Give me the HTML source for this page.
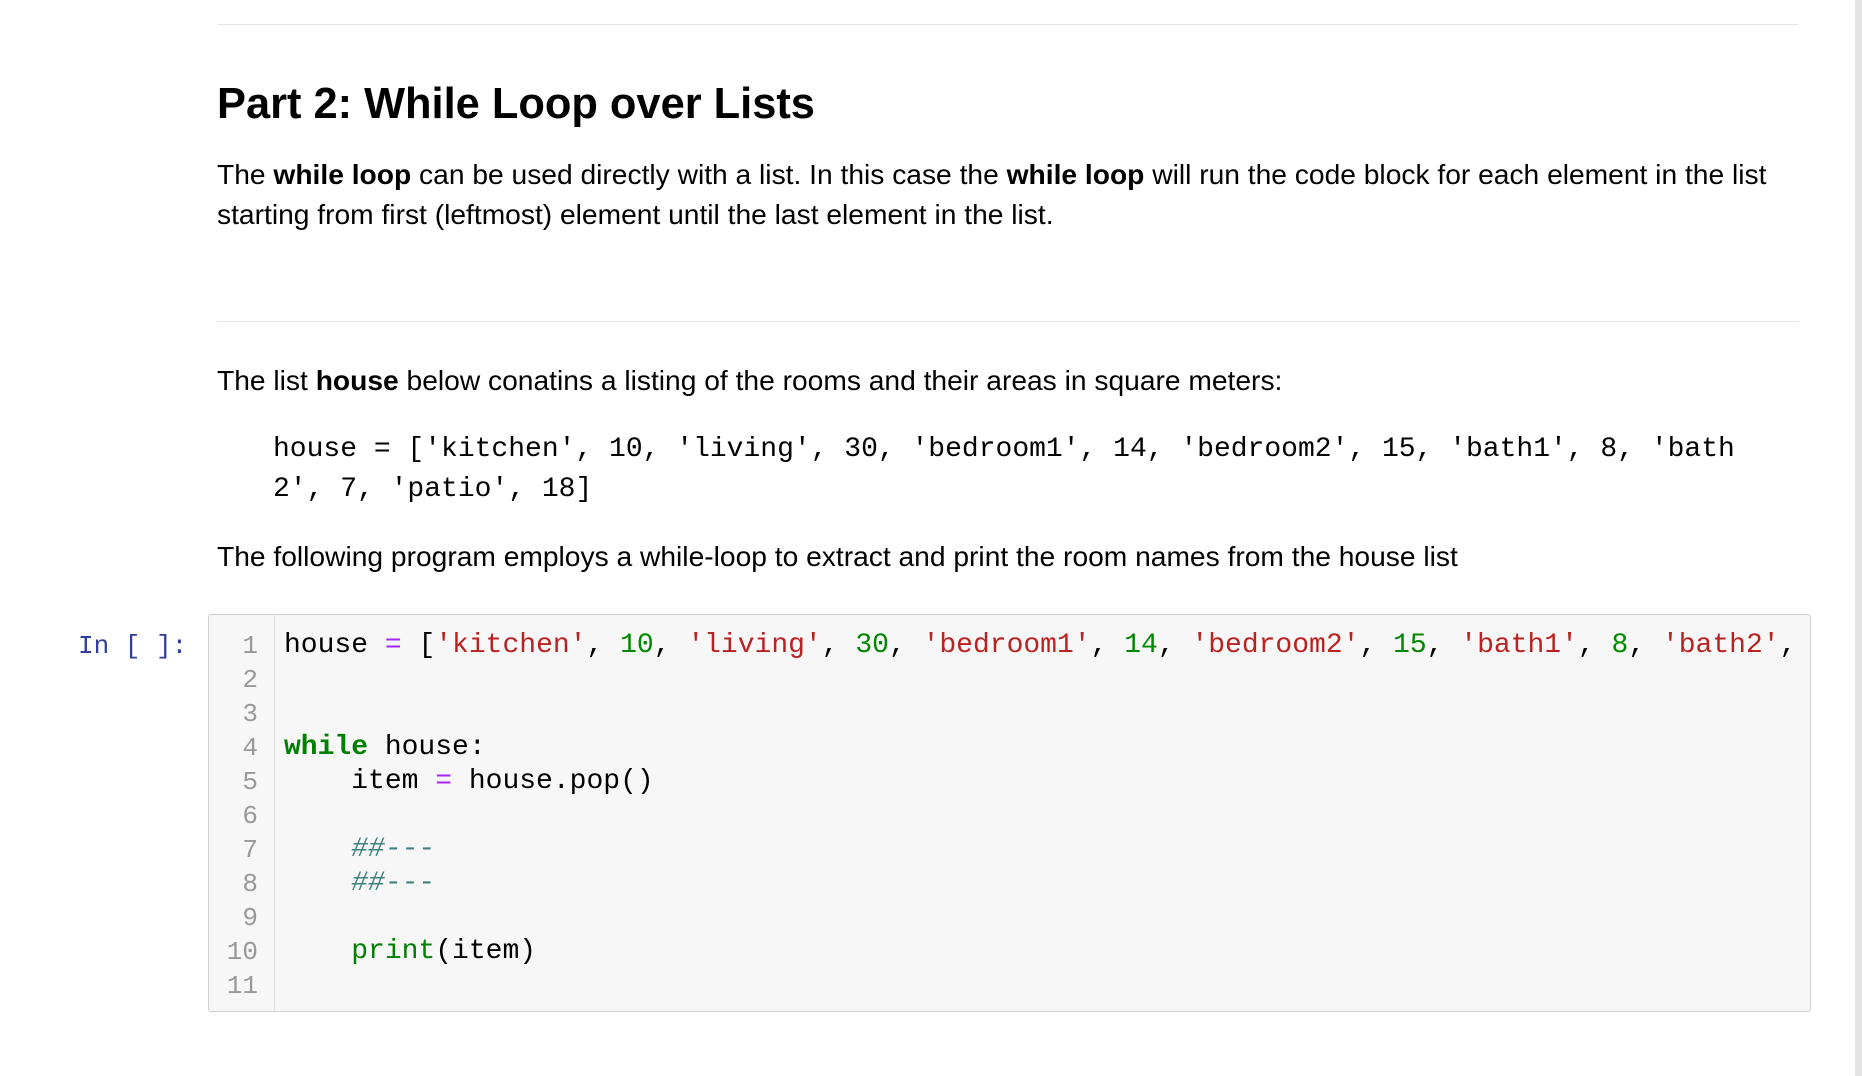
<!DOCTYPE html>
<html><head><meta charset="utf-8"><style>
html,body{margin:0;padding:0;background:#fff;width:1862px;height:1076px;overflow:hidden;position:relative}
.a{position:absolute;white-space:nowrap}
.hr{position:absolute;left:217px;width:1582px;height:1px;background:#e6e6e6}
.sans{font-family:"Liberation Sans",Arial,sans-serif;color:#000}
.p{font-size:28.2px;line-height:40px}
.mono{font-family:"Liberation Mono","Courier New",monospace;font-size:28px;line-height:40px;color:#000}
.box{position:absolute;left:208px;top:614px;width:1601px;height:396px;background:#f7f7f7;border:1px solid #cfcfcf;border-radius:3px}
.gut{position:absolute;left:274px;top:615px;width:1px;height:396px;background:#ddd}
.ln{position:absolute;left:210px;width:48px;text-align:right;color:#999;font-family:"Liberation Mono",monospace;font-size:26px;line-height:34px}
.cd{position:absolute;left:284px;font-family:"Liberation Mono",monospace;font-size:28px;line-height:34px;color:#000;white-space:pre}
.s{color:#BA2121}.n{color:#008800}.o{color:#AA22FF}.k{color:#008000;font-weight:bold}.c{color:#408080;font-style:italic}.b{color:#008000}
</style></head><body>
<div class="hr" style="top:24px"></div>
<div class="a sans" style="left:217px;top:77px;font-size:43.4px;font-weight:bold;line-height:54px">Part 2: While Loop over Lists</div>
<div class="a sans p" style="left:217px;top:154px">The <b>while loop</b> can be used directly with a list. In this case the <b>while loop</b> will run the code block for each element in the list</div>
<div class="a sans p" style="left:217px;top:194px">starting from first (leftmost) element until the last element in the list.</div>
<div class="hr" style="top:321px"></div>
<div class="a sans p" style="left:217px;top:360px">The list <b>house</b> below conatins a listing of the rooms and their areas in square meters:</div>
<div class="a mono" style="left:273px;top:430px">house = ['kitchen', 10, 'living', 30, 'bedroom1', 14, 'bedroom2', 15, 'bath1', 8, 'bath</div>
<div class="a mono" style="left:273px;top:470px">2', 7, 'patio', 18]</div>
<div class="a sans p" style="left:217px;top:536px">The following program employs a while-loop to extract and print the room names from the house list</div>
<div class="a" style="left:78px;top:629px;font-family:'Liberation Mono',monospace;font-size:26px;line-height:34px;color:#303F9F">In [ ]:</div>
<div class="box"></div><div class="gut"></div>
<div class="ln" style="top:629px">1<br>2<br>3<br>4<br>5<br>6<br>7<br>8<br>9<br>10<br>11</div>
<div class="cd" style="top:629px">house <span class="o">=</span> [<span class="s">'kitchen'</span>, <span class="n">10</span>, <span class="s">'living'</span>, <span class="n">30</span>, <span class="s">'bedroom1'</span>, <span class="n">14</span>, <span class="s">'bedroom2'</span>, <span class="n">15</span>, <span class="s">'bath1'</span>, <span class="n">8</span>, <span class="s">'bath2'</span>,


<span class="k">while</span> house:
    item <span class="o">=</span> house.pop()

    <span class="c">##---</span>
    <span class="c">##---</span>

    <span class="b">print</span>(item)
</div>
<div style="position:absolute;left:1855px;top:0;width:7px;height:1076px;background:#e3e3e3"></div>
</body></html>
